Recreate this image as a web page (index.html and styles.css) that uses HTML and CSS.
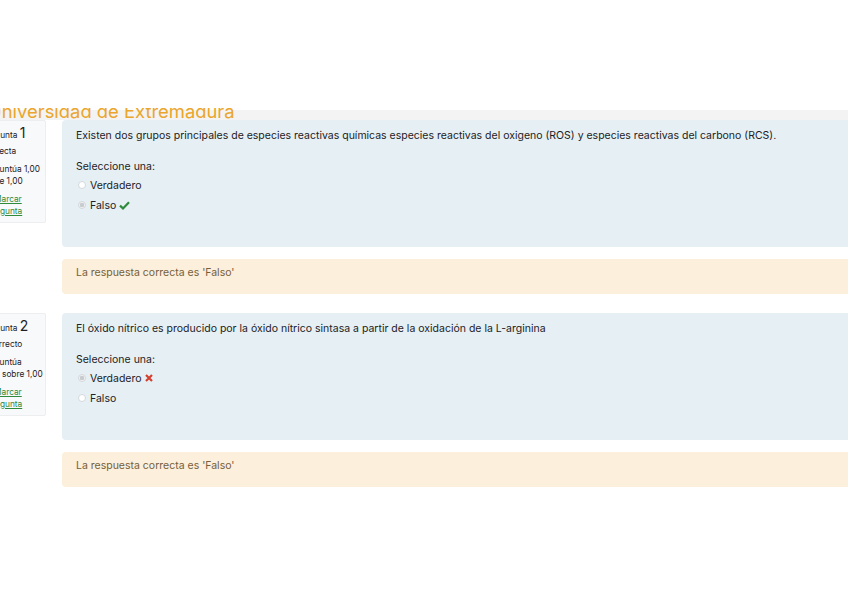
FILE: index.html
```html
<!DOCTYPE html>
<html lang="es">
<head>
	<meta charset="utf-8">
	<meta name="viewport" content="width=device-width, initial-scale=1">
	<title>Revisión del intento</title>
	<link rel="stylesheet" href="styles.css">
</head>
<body>
	<div class="top"></div>
	<div class="brand">
		<span>Universidad de Extremadura</span>
	</div>

	<div class="page">
		<div class="que">
			<div class="info">
				<h3 class="no">Pregunta <span class="qno">1</span></h3>
				<div class="state">Correcta</div>
				<div class="grade">Se puntúa 1,00<br>sobre 1,00</div>
				<a class="flag" href="#">Marcar pregunta</a>
			</div>
			<div class="content">
				<div class="formulation">
					<p class="qtext">Existen dos grupos principales de especies reactivas químicas especies reactivas del oxigeno (ROS) y especies reactivas del carbono (RCS).</p>
					<div class="prompt">Seleccione una:</div>
					<div class="answer">
						<div class="opt"><span class="radio"></span>Verdadero</div>
						<div class="opt"><span class="radio checked"></span>Falso
							<svg class="mark" width="11" height="9" viewBox="0 0 11 9"><path d="M1 4.6 L4 7.4 L10 1.2" fill="none" stroke="#2f8a3b" stroke-width="2.2"/></svg>
						</div>
					</div>
				</div>
				<div class="outcome">La respuesta correcta es 'Falso'</div>
			</div>
		</div>

		<div class="que">
			<div class="info">
				<h3 class="no">Pregunta <span class="qno">2</span></h3>
				<div class="state">Incorrecto</div>
				<div class="grade">Se puntúa<br>0,00 sobre 1,00</div>
				<a class="flag" href="#">Marcar pregunta</a>
			</div>
			<div class="content">
				<div class="formulation">
					<p class="qtext">El óxido nítrico es producido por la óxido nítrico sintasa a partir de la oxidación de la L-arginina</p>
					<div class="prompt">Seleccione una:</div>
					<div class="answer">
						<div class="opt"><span class="radio checked"></span>Verdadero
							<svg class="mark" width="8" height="8" viewBox="0 0 8 8"><path d="M1 1 L7 7 M7 1 L1 7" fill="none" stroke="#d43f2f" stroke-width="2.2"/></svg>
						</div>
						<div class="opt"><span class="radio"></span>Falso</div>
					</div>
				</div>
				<div class="outcome">La respuesta correcta es 'Falso'</div>
			</div>
		</div>
	</div>
</body>
</html>
```

FILE: styles.css
```css
*{
	margin: 0;
	box-sizing: border-box;
}

body{
	width: 848px;
	overflow: hidden;
	background: #fff;
	font-family: 'Inter', 'Noto Sans', sans-serif;
	color: #1d2125;
}

.top{
	height: 108px;
}

/* header is scrolled under the top bar, only the lower half shows */
.brand{
	height: 12px;
	overflow: hidden;
	margin-left: -12px;
	background: linear-gradient(#fff 0 2px, #f3f3f3 2px);
}

.brand span{
	display: block;
	font-size: 18.4px;
	line-height: 18px;
	margin-top: -6px;
	color: #eaa52c;
}

.page{
	width: 960px;
	margin-left: -24px;
	display: flex;
	flex-direction: column;
	gap: 19px;
}

.que{
	display: flex;
	align-items: flex-start;
	gap: 16px;
}

.info{
	width: 70px;
	flex-shrink: 0;
	background: #f8f9fa;
	border: 1px solid #eceeef;
	border-radius: 2px;
	padding: 4px 5px 5px;
	font-size: 8.3px;
	line-height: 12px;
	white-space: nowrap;
}

.no{
	font-weight: 400;
	font-size: 8.3px;
	line-height: 16px;
}

.qno{
	font-size: 14px;
}

.state{
	margin: 2px 0 6px;
}

.grade{
	margin-bottom: 6px;
}

.flag{
	color: #2f8a3b;
	text-decoration: underline;
	display: block;
	white-space: normal;
	margin-left: 5px;
	text-indent: 7px;
}

.content{
	flex: 1;
	display: flex;
	flex-direction: column;
	gap: 12px;
}

.formulation{
	background: #e6f0f4;
	border-radius: 4px;
	padding: 7px 14px 32px;
	font-size: 10.5px;
}

.qtext{
	line-height: 18px;
	margin-bottom: 13px;
}

.prompt{
	line-height: 17px;
}

.opt{
	display: flex;
	align-items: center;
	height: 20px;
	padding-left: 2px;
}

.radio{
	width: 8px;
	height: 8px;
	border-radius: 50%;
	border: 1px solid #d4d8db;
	background: #fff;
	margin-right: 4px;
}

.radio.checked{
	background: radial-gradient(circle, #c9ccce 0 2px, #f1f2f3 2.5px);
}

.mark{
	margin-left: 3px;
}

.outcome{
	background: #fcefdc;
	border-radius: 4px;
	padding: 5px 14px 12px;
	line-height: 18px;
	font-size: 10.5px;
	color: #76603a;
}
```
